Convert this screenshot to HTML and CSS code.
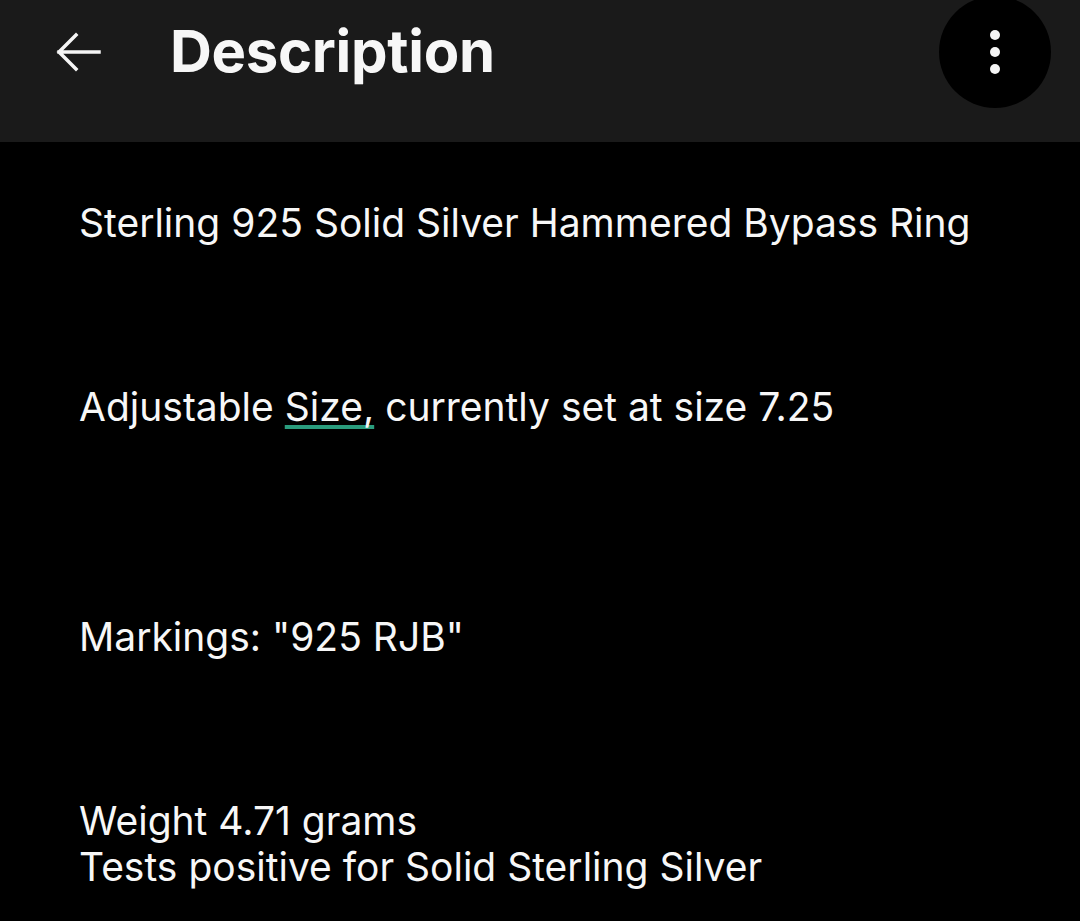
FILE: index.html
```html
<!DOCTYPE html>
<html lang="en">
<head>
<meta charset="utf-8">
<title>Description</title>
<link rel="stylesheet" href="styles.css">
</head>
<body>
<header class="topbar">
  <button class="back" aria-label="Back">
    <svg width="48" height="40" viewBox="0 0 48 40"><path d="M45 20H5M22 3L5 20l17 17" fill="none" stroke="#f5f5f5" stroke-width="3.5" stroke-linecap="square"/></svg>
  </button>
  <h1 class="title">Description</h1>
  <button class="menu" aria-label="More options">
    <span class="dot"></span><span class="dot"></span><span class="dot"></span>
  </button>
</header>
<main class="content">
<p class="desc">Sterling 925 Solid Silver Hammered Bypass Ring



Adjustable <span class="link">Size,</span> currently set at size 7.25




Markings: "925 RJB"



Weight 4.71 grams
Tests positive for Solid Sterling Silver</p>
</main>
</body>
</html>
```
FILE: styles.css
```css
* { box-sizing: border-box; }
html, body { margin: 0; padding: 0; background: #000; }
body { width: 1080px; height: 921px; overflow: hidden; font-family: Inter, "Noto Sans", sans-serif; color: #f7f7f7; }
.topbar { height: 142px; background: #1a1a1a; display: flex; align-items: flex-start; position: relative; }
.back { margin: 32px 0 0 54px; width: 48px; height: 40px; padding: 0; border: 0; background: none; display: flex; }
.title { margin: 18px 0 0 68px; font-size: 58px; font-weight: 700; line-height: 66px; letter-spacing: -0.3px; }
.menu { position: absolute; left: 939px; top: -4px; width: 112px; height: 112px; border-radius: 50%; background: #000; border: 0; padding: 0; display: flex; flex-direction: column; align-items: center; justify-content: center; gap: 7px; }
.dot { width: 10px; height: 10px; border-radius: 50%; background: #f5f5f5; }
.content { padding: 58px 0 0 79px; }
.desc { margin: 0; white-space: pre-line; font-size: 39px; line-height: 46px; }
.link { text-decoration: underline; text-decoration-color: #2a9c7d; text-decoration-thickness: 4px; text-underline-offset: 4px; text-decoration-skip-ink: none; }
```
